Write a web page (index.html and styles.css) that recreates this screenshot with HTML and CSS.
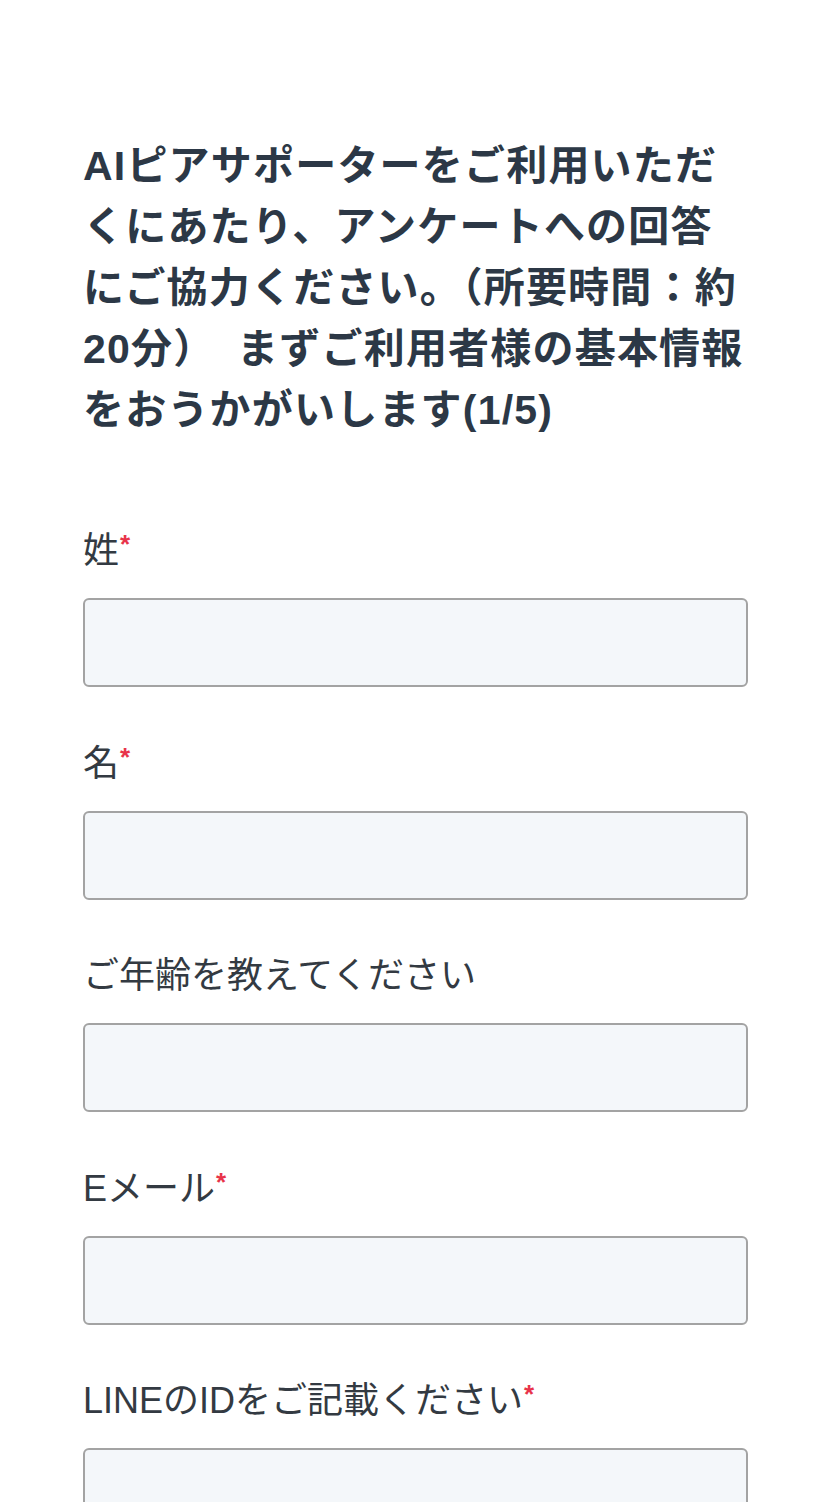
FILE: index.html
```html
<!DOCTYPE html>
<html lang="ja">
<head>
<meta charset="utf-8">
<title>アンケート</title>
<link rel="stylesheet" href="styles.css">
</head>
<body>
<main class="form">
  <h1 class="title">AIピアサポーターをご利用いただ<br>くにあたり、アンケートへの回答<br>にご協力ください。（所要時間：約<br>20分）　まずご利用者様の基本情報<br>をおうかがいします(1/5)</h1>
  <div class="fields">
    <div class="field">
      <label class="label">姓<span class="req">*</span></label>
      <div class="input"></div>
    </div>
    <div class="field">
      <label class="label">名<span class="req">*</span></label>
      <div class="input"></div>
    </div>
    <div class="field">
      <label class="label">ご年齢を教えてください</label>
      <div class="input"></div>
    </div>
    <div class="field">
      <label class="label">Eメール<span class="req">*</span></label>
      <div class="input"></div>
    </div>
    <div class="field">
      <label class="label">LINEのIDをご記載ください<span class="req">*</span></label>
      <div class="input"></div>
    </div>
  </div>
</main>
</body>
</html>
```
FILE: styles.css
```css
* { box-sizing: border-box; }
html, body { margin: 0; padding: 0; background: #ffffff; }
body {
  font-family: "Liberation Sans", "Noto Sans CJK JP", sans-serif;
  color: #2f3a45;
  height: 1502px;
  overflow: hidden;
}
.form {
  width: 665px;
  margin-left: 83px;
  padding-top: 136px;
}
.title {
  margin: 0;
  font-size: 41px;
  line-height: 61px;
  font-weight: 700;
  letter-spacing: 1.2px;
  color: #2c3846;
  white-space: nowrap;
}
.fields {
  margin-top: 82px;
  display: flex;
  flex-direction: column;
  gap: 48.5px;
}
.field {
  display: flex;
  flex-direction: column;
  gap: 20px;
}
.label {
  display: block;
  font-size: 36px;
  line-height: 54px;
  font-weight: 400;
  color: #333a42;
  padding-top: 1px;
}
.req {
  color: #e8334a;
  font-size: 26px;
  font-weight: 700;
  vertical-align: top;
  line-height: 40px;
  margin-left: 1px;
}
.input {
  height: 89px;
  background: #f4f7fa;
  border: 2px solid #a3a3a3;
  border-radius: 6px;
}
```
